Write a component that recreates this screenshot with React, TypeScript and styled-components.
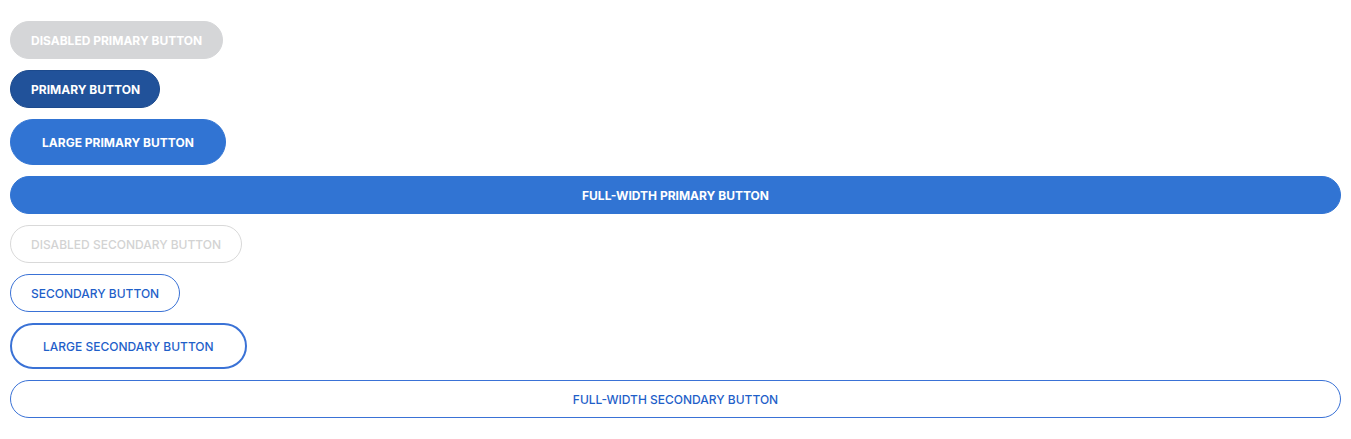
import React from "react";
import styled, { createGlobalStyle, css } from "styled-components";

const Global = createGlobalStyle`
  html, body { margin: 0; padding: 0; background: #ffffff; }
  body { font-family: Inter, "Noto Sans", sans-serif; }
`;

const Stack = styled.div`
  display: flex;
  flex-direction: column;
  align-items: flex-start;
  gap: 11px;
  padding: 21px 10px 20px 10px;
`;

type Variant = "primary" | "secondary";

const Button = styled.button<{ $variant: Variant; $large?: boolean; $full?: boolean }>`
  box-sizing: border-box;
  font-family: Inter, "Noto Sans", sans-serif;
  font-size: 12px;
  line-height: 16px;
  text-transform: uppercase;
  border-radius: 999px;
  cursor: pointer;
  height: ${(p) => (p.$large ? "46px" : "38px")};
  padding: 2px ${(p) => (p.$large ? "31px" : "20px")} 0;
  width: ${(p) => (p.$full ? "100%" : "auto")};
  white-space: nowrap;
  ${(p) =>
    p.$variant === "primary"
      ? css`
          font-weight: 700;
          color: #ffffff;
          background: #3174d3;
          border: 1px solid #3174d3;
          &:disabled {
            background: #d5d6d8;
            border-color: #d5d6d8;
            color: #ffffff;
            cursor: default;
          }
        `
      : css`
          font-weight: 500;
          color: #1f5fc9;
          background: #ffffff;
          border: ${p.$large ? "2px" : "1px"} solid #3a72d6;
          &:disabled {
            border-color: #d9d9d9;
            color: #d3d3d3;
            cursor: default;
          }
        `}
`;

const DarkPrimary = styled(Button)`
  background: #21529a;
  border-color: #1c4a8d;
  padding-right: 19px;
`;

export default function App() {
  return (
    <>
      <Global />
      <Stack>
        <Button $variant="primary" disabled>
          Disabled Primary Button
        </Button>
        <DarkPrimary $variant="primary">Primary Button</DarkPrimary>
        <Button $variant="primary" $large>
          Large Primary Button
        </Button>
        <Button $variant="primary" $full>
          Full-Width Primary Button
        </Button>
        <Button $variant="secondary" disabled>
          Disabled Secondary Button
        </Button>
        <Button $variant="secondary">Secondary Button</Button>
        <Button $variant="secondary" $large>
          Large Secondary Button
        </Button>
        <Button $variant="secondary" $full>
          Full-Width Secondary Button
        </Button>
      </Stack>
    </>
  );
}
